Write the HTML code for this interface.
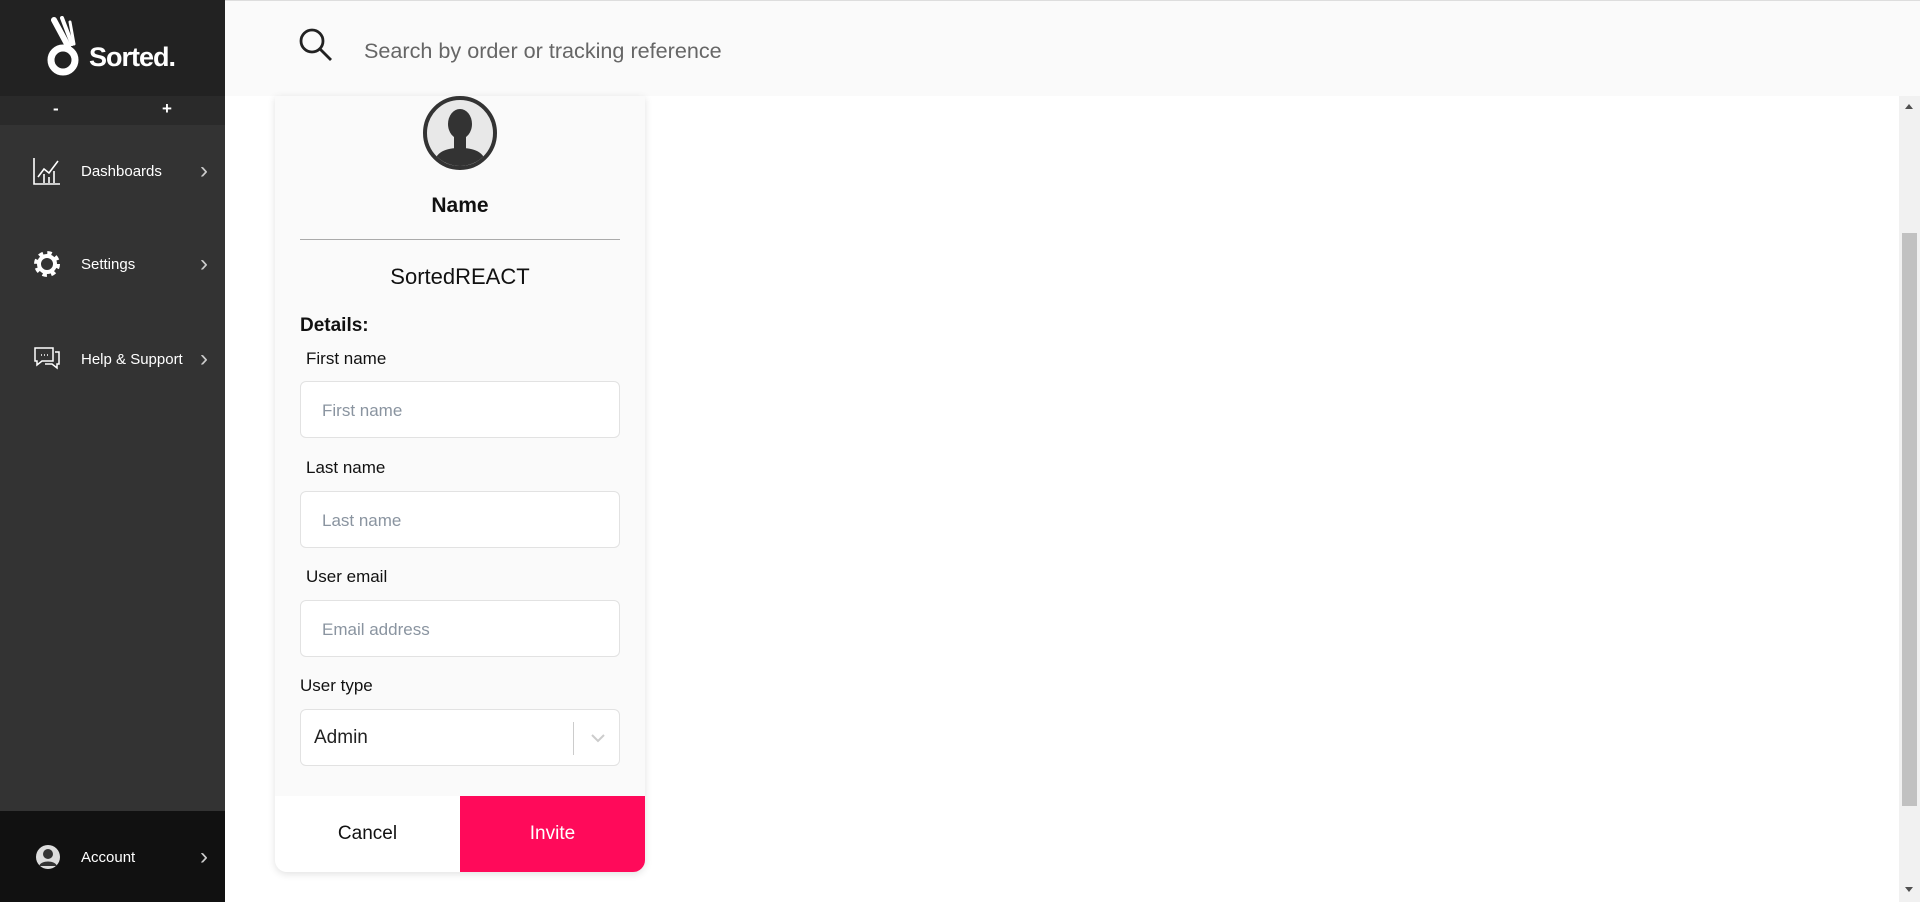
<!DOCTYPE html>
<html><head><style>
*{box-sizing:border-box;margin:0;padding:0}
body{width:1920px;height:902px;overflow:hidden;background:#fff;font-family:"Liberation Sans",sans-serif;position:relative}
.abs{position:absolute}
.side{left:0;top:0;width:225px;height:902px;background:#333}
.logo{left:0;top:0;width:225px;height:96px;background:#222}
.pm{left:0;top:96px;width:225px;height:29px;background:#2a2a2a;color:#fff;font-weight:bold;font-size:17px}
.mi{left:0;width:225px;height:40px;color:#fff;font-size:15px}
.mi span{position:absolute;left:81px;top:11px}
.mi .ch{left:200px;top:5px;font-size:24px;color:#ccc}
.hdr{left:225px;top:0;width:1695px;height:96px;background:#fafafa;border-top:1px solid #ddd}
.card{left:275px;top:96px;width:370px;height:776px;background:#fafafa;border-radius:0 0 12px 12px;box-shadow:0 2px 8px rgba(0,0,0,.12);overflow:hidden}
.lbl{font-size:17px;color:#111}
.inp{left:25px;width:320px;height:57px;border:1px solid #e2e2e2;border-radius:6px;background:#fff;font-size:17px;color:#8a94a0;padding:19px 0 0 21px}
</style></head><body>
<div class="abs side"></div>
<div class="abs logo">
<svg class="abs" style="left:46px;top:16px" width="45" height="60" viewBox="0 0 45 60"><circle cx="17" cy="44" r="12" fill="none" stroke="#fff" stroke-width="7"/><path d="M8 4 L22 30" stroke="#fff" stroke-width="6" stroke-linecap="round"/><path d="M16 2 L26 28" stroke="#fff" stroke-width="4" stroke-linecap="round"/><path d="M24 6 L28 28" stroke="#fff" stroke-width="3" stroke-linecap="round"/></svg>
<div class="abs" style="left:89px;top:42px;color:#fff;font-size:27px;font-weight:bold;letter-spacing:-1px">Sorted.</div>
</div>
<div class="abs pm"><span class="abs" style="left:53px;top:3px">-</span><span class="abs" style="left:162px;top:3px">+</span></div>
<div class="abs mi" style="top:152px"><svg class="abs" style="left:33px;top:5px" width="28" height="28" viewBox="0 0 28 28" fill="none" stroke="#fff" stroke-width="1.6"><path d="M1 1V27H27"/><path d="M5 20L11 12L16 16L25 4"/><path d="M11 26V17M16 26V20M21 26V14"/></svg><span>Dashboards</span><span class="ch">›</span></div>
<div class="abs mi" style="top:245px"><svg class="abs" style="left:33px;top:5px" width="28" height="28" viewBox="0 0 28 28"><circle cx="14" cy="14" r="10" fill="none" stroke="#fff" stroke-width="6" stroke-dasharray="4 3.85"/><circle cx="14" cy="14" r="8" fill="none" stroke="#fff" stroke-width="4"/></svg><span>Settings</span><span class="ch">›</span></div>
<div class="abs mi" style="top:340px"><svg class="abs" style="left:33px;top:6px" width="28" height="26" viewBox="0 0 28 26" fill="none" stroke="#fff" stroke-width="1.5"><path d="M2 2H20V15H9L4 19V15H2Z"/><path d="M22 6H26V18H24V22L19 18H12"/><path d="M8 9h1M11 9h1M14 9h1"/></svg><span>Help &amp; Support</span><span class="ch">›</span></div>
<div class="abs" style="left:0;top:811px;width:225px;height:91px;background:#111"></div>
<div class="abs mi" style="top:838px"><svg class="abs" style="left:35px;top:6px" width="26" height="26" viewBox="0 0 26 26"><circle cx="13" cy="13" r="12" fill="#ddd"/><circle cx="13" cy="10" r="5" fill="#333"/><path d="M4 22C6 16 20 16 22 22Z" fill="#333"/></svg><span>Account</span><span class="ch">›</span></div>
<div class="abs hdr"></div>
<svg class="abs" style="left:298px;top:27px" width="36" height="36" viewBox="0 0 36 36" fill="none" stroke="#222" stroke-width="2.8"><circle cx="14" cy="14" r="11"/><path d="M22 22L33 33"/></svg>
<div class="abs" style="left:364px;top:38px;font-size:21.6px;color:#666">Search by order or tracking reference</div>
<div class="abs card">
<svg class="abs" style="left:148px;top:0px" width="74" height="74" viewBox="0 0 74 74"><circle cx="37" cy="37" r="35" fill="#e8e8e8" stroke="#333" stroke-width="4"/><clipPath id="c"><circle cx="37" cy="37" r="33"/></clipPath><g clip-path="url(#c)" fill="#333"><ellipse cx="37" cy="28" rx="12" ry="15"/><path d="M10 74C10 56 22 52 37 52C52 52 64 56 64 74Z"/><rect x="31" y="38" width="12" height="16"/></g></svg>
<div class="abs" style="left:0;width:370px;top:98px;text-align:center;font-weight:bold;font-size:21px;color:#111">Name</div>
<div class="abs" style="left:25px;top:143px;width:320px;height:1px;background:#aaa"></div>
<div class="abs" style="left:0;width:370px;top:168px;text-align:center;font-size:22px;color:#111">SortedREACT</div>
<div class="abs" style="left:25px;top:219px;font-weight:bold;font-size:19px;color:#111">Details:</div>
<div class="abs lbl" style="left:31px;top:253px">First name</div>
<div class="abs inp" style="top:285px">First name</div>
<div class="abs lbl" style="left:31px;top:362px">Last name</div>
<div class="abs inp" style="top:395px">Last name</div>
<div class="abs lbl" style="left:31px;top:471px">User email</div>
<div class="abs inp" style="top:504px">Email address</div>
<div class="abs lbl" style="left:25px;top:580px">User type</div>
<div class="abs inp" style="top:613px;color:#222;font-size:19px;padding:17px 0 0 13px">Admin
<div class="abs" style="left:272px;top:12px;width:1px;height:33px;background:#ccc"></div>
<svg class="abs" style="left:289px;top:22px" width="16" height="12" viewBox="0 0 16 12" fill="none" stroke="#ccc" stroke-width="2"><path d="M2 3L8 9L14 3"/></svg></div>
<div class="abs" style="left:0;top:700px;width:185px;height:76px;background:#fff;font-size:19px;color:#111;text-align:center;line-height:76px">Cancel</div>
<div class="abs" style="left:185px;top:700px;width:185px;height:76px;background:#ff0a5a;font-size:19px;color:#fff;text-align:center;line-height:76px">Invite</div>
</div>
<div class="abs" style="left:1899px;top:96px;width:21px;height:806px;background:#f1f1f1"></div>
<div class="abs" style="left:1902px;top:233px;width:15px;height:573px;background:#c1c1c1"></div>
<svg class="abs" style="left:1904px;top:102px" width="10" height="8"><path d="M1 7L5 2L9 7Z" fill="#505050"/></svg>
<svg class="abs" style="left:1904px;top:886px" width="10" height="8"><path d="M1 1L5 6L9 1Z" fill="#505050"/></svg>
</body></html>
